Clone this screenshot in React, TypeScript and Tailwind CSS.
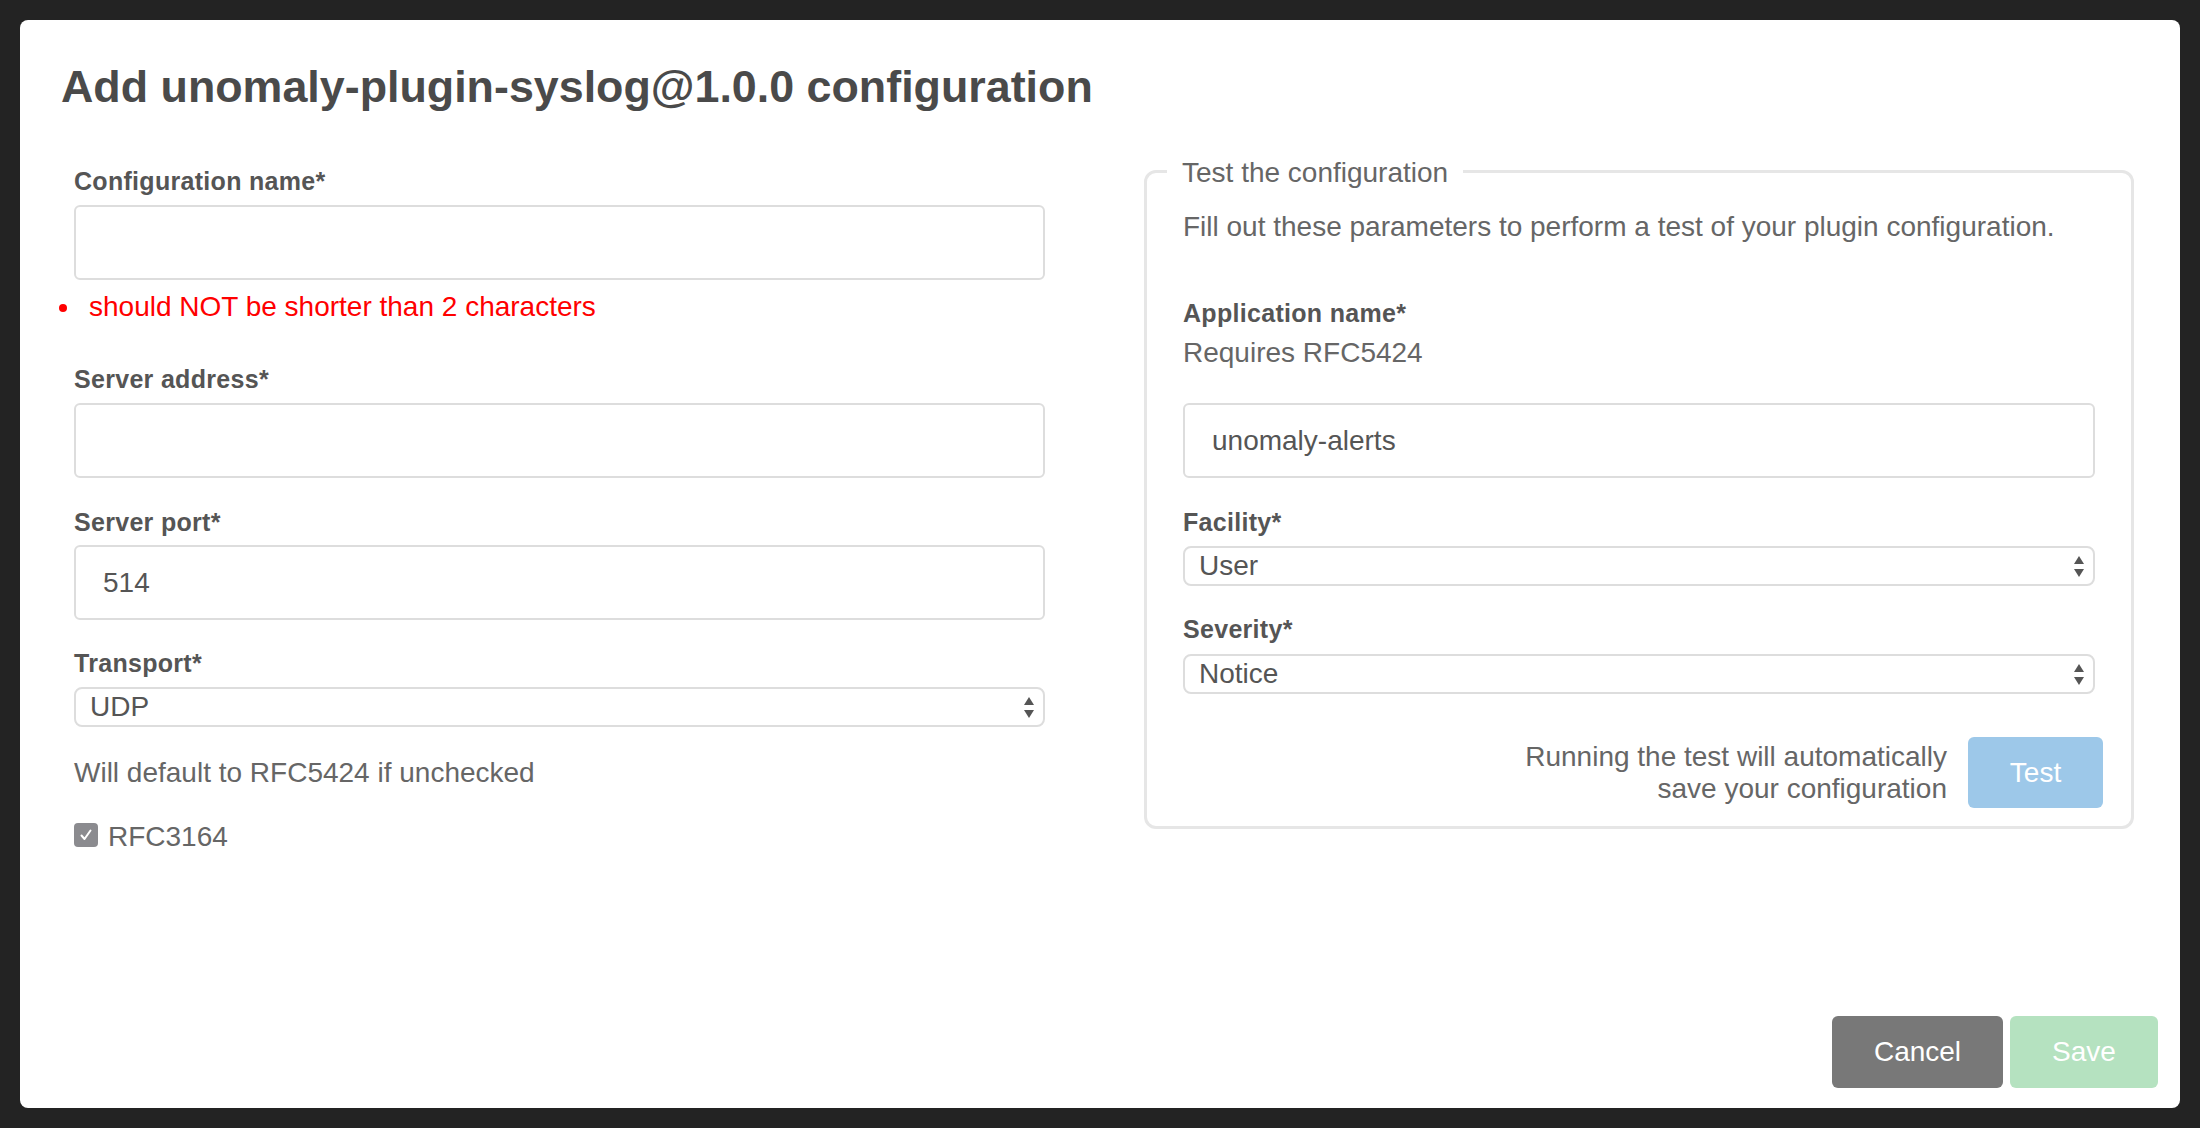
import React from "react";

const font = { fontFamily: '"Liberation Sans", Arial, Helvetica, sans-serif' };

function Label({ children, className = "" }: { children: React.ReactNode; className?: string }) {
  return (
    <div className={`text-[25px] leading-[30px] font-bold text-[#555555] tracking-[0.3px] ${className}`}>
      {children}
    </div>
  );
}

function TextInput({ value, className = "" }: { value?: string; className?: string }) {
  return (
    <div
      className={`h-[75px] w-full rounded-[6px] border-2 border-[#dddddd] bg-white flex items-center pl-[27px] text-[28px] text-[#555555] ${className}`}
    >
      {value}
    </div>
  );
}

function Arrows() {
  return (
    <svg width="12" height="24" viewBox="0 0 12 24" className="shrink-0">
      <path d="M6 2 L11 10 L1 10 Z" fill="#555555" />
      <path d="M6 23 L11 15 L1 15 Z" fill="#555555" />
    </svg>
  );
}

function Select({ value, className = "" }: { value: string; className?: string }) {
  return (
    <div
      className={`h-[40px] w-full rounded-[8px] border-2 border-[#dddddd] bg-white flex items-center justify-between pl-[14px] pr-[8px] text-[28px] text-[#555555] ${className}`}
    >
      <span className="leading-[34px]">{value}</span>
      <Arrows />
    </div>
  );
}

export default function App() {
  return (
    <div style={font} className="w-[2200px] h-[1128px] bg-[#232323] pt-[20px] pl-[20px]">
      <div className="w-[2160px] h-[1088px] bg-white rounded-[8px] flex flex-col">
        <h1 className="pt-[40px] pl-[41px] text-[44.8px] leading-[52px] font-bold text-[#4a4a4a]">
          Add unomaly-plugin-syslog@1.0.0 configuration
        </h1>

        <div className="flex pl-[54px]">
          {/* Left column */}
          <div className="w-[971px] flex flex-col">
            <Label className="mt-[54px]">Configuration name*</Label>
            <TextInput className="mt-[9px]" />
            <div className="mt-[10px] flex items-center text-[28px] leading-[34px] text-[#ff0000]">
              <span className="w-[8px] h-[8px] rounded-full bg-[#ff0000] ml-[-15px] mr-[22px] mt-[2px]" />
              <span>should NOT be shorter than 2 characters</span>
            </div>

            <Label className="mt-[40px]">Server address*</Label>
            <TextInput className="mt-[9px]" />

            <Label className="mt-[29px]">Server port*</Label>
            <TextInput className="mt-[8px]" value="514" />

            <Label className="mt-[28px]">Transport*</Label>
            <Select className="mt-[9px]" value="UDP" />

            <div className="mt-[29px] text-[28px] leading-[34px] text-[#666666]">
              Will default to RFC5424 if unchecked
            </div>

            <div className="mt-[30px] flex items-center text-[28px] leading-[34px] text-[#666666]">
              <span className="w-[24px] h-[24px] rounded-[4px] bg-[#8b8b8f] flex items-center justify-center mr-[10px] mt-[-5px]">
                <svg width="14" height="14" viewBox="0 0 14 14">
                  <path d="M2.5 7.5 L5.5 11 L11.5 2.5" stroke="white" strokeWidth="2" fill="none" strokeLinecap="round" strokeLinejoin="round" />
                </svg>
              </span>
              <span>RFC3164</span>
            </div>
          </div>

          {/* Right column */}
          <div className="ml-[99px] w-[990px] mt-[58px] self-start">
            <div className="relative border-[3px] border-[#e6e6e6] rounded-[12px] pt-[37px] pl-[36px] pr-[36px] pb-[18px]">
              <span className="absolute left-[20px] top-[-17px] bg-white px-[15px] text-[28px] leading-[34px] text-[#666666]">
                Test the configuration
              </span>
              <div className="text-[28px] leading-[34px] text-[#666666]">
                Fill out these parameters to perform a test of your plugin configuration.
              </div>

              <Label className="mt-[54px]">Application name*</Label>
              <div className="mt-[8px] text-[28px] leading-[34px] text-[#666666]">Requires RFC5424</div>
              <TextInput className="mt-[33px]" value="unomaly-alerts" />

              <Label className="mt-[29px]">Facility*</Label>
              <Select className="mt-[9px]" value="User" />

              <Label className="mt-[28px]">Severity*</Label>
              <Select className="mt-[10px]" value="Notice" />

              <div className="mt-[43px] mr-[-8px] flex items-center justify-end gap-[21px]">
                <div className="text-right text-[28px] leading-[32px] text-[#666666]">
                  Running the test will automatically
                  <br />
                  save your configuration
                </div>
                <button className="w-[135px] h-[71px] rounded-[6px] bg-[#9dc8e9] text-white text-[28px]">
                  Test
                </button>
              </div>
            </div>
          </div>
        </div>

        <div className="mt-auto flex justify-end gap-[7px] pr-[22px] pb-[20px]">
          <button className="w-[171px] h-[72px] rounded-[6px] bg-[#787878] text-white text-[28px]">
            Cancel
          </button>
          <button className="w-[148px] h-[72px] rounded-[6px] bg-[#b5e2c0] text-white text-[28px]">
            Save
          </button>
        </div>
      </div>
    </div>
  );
}
